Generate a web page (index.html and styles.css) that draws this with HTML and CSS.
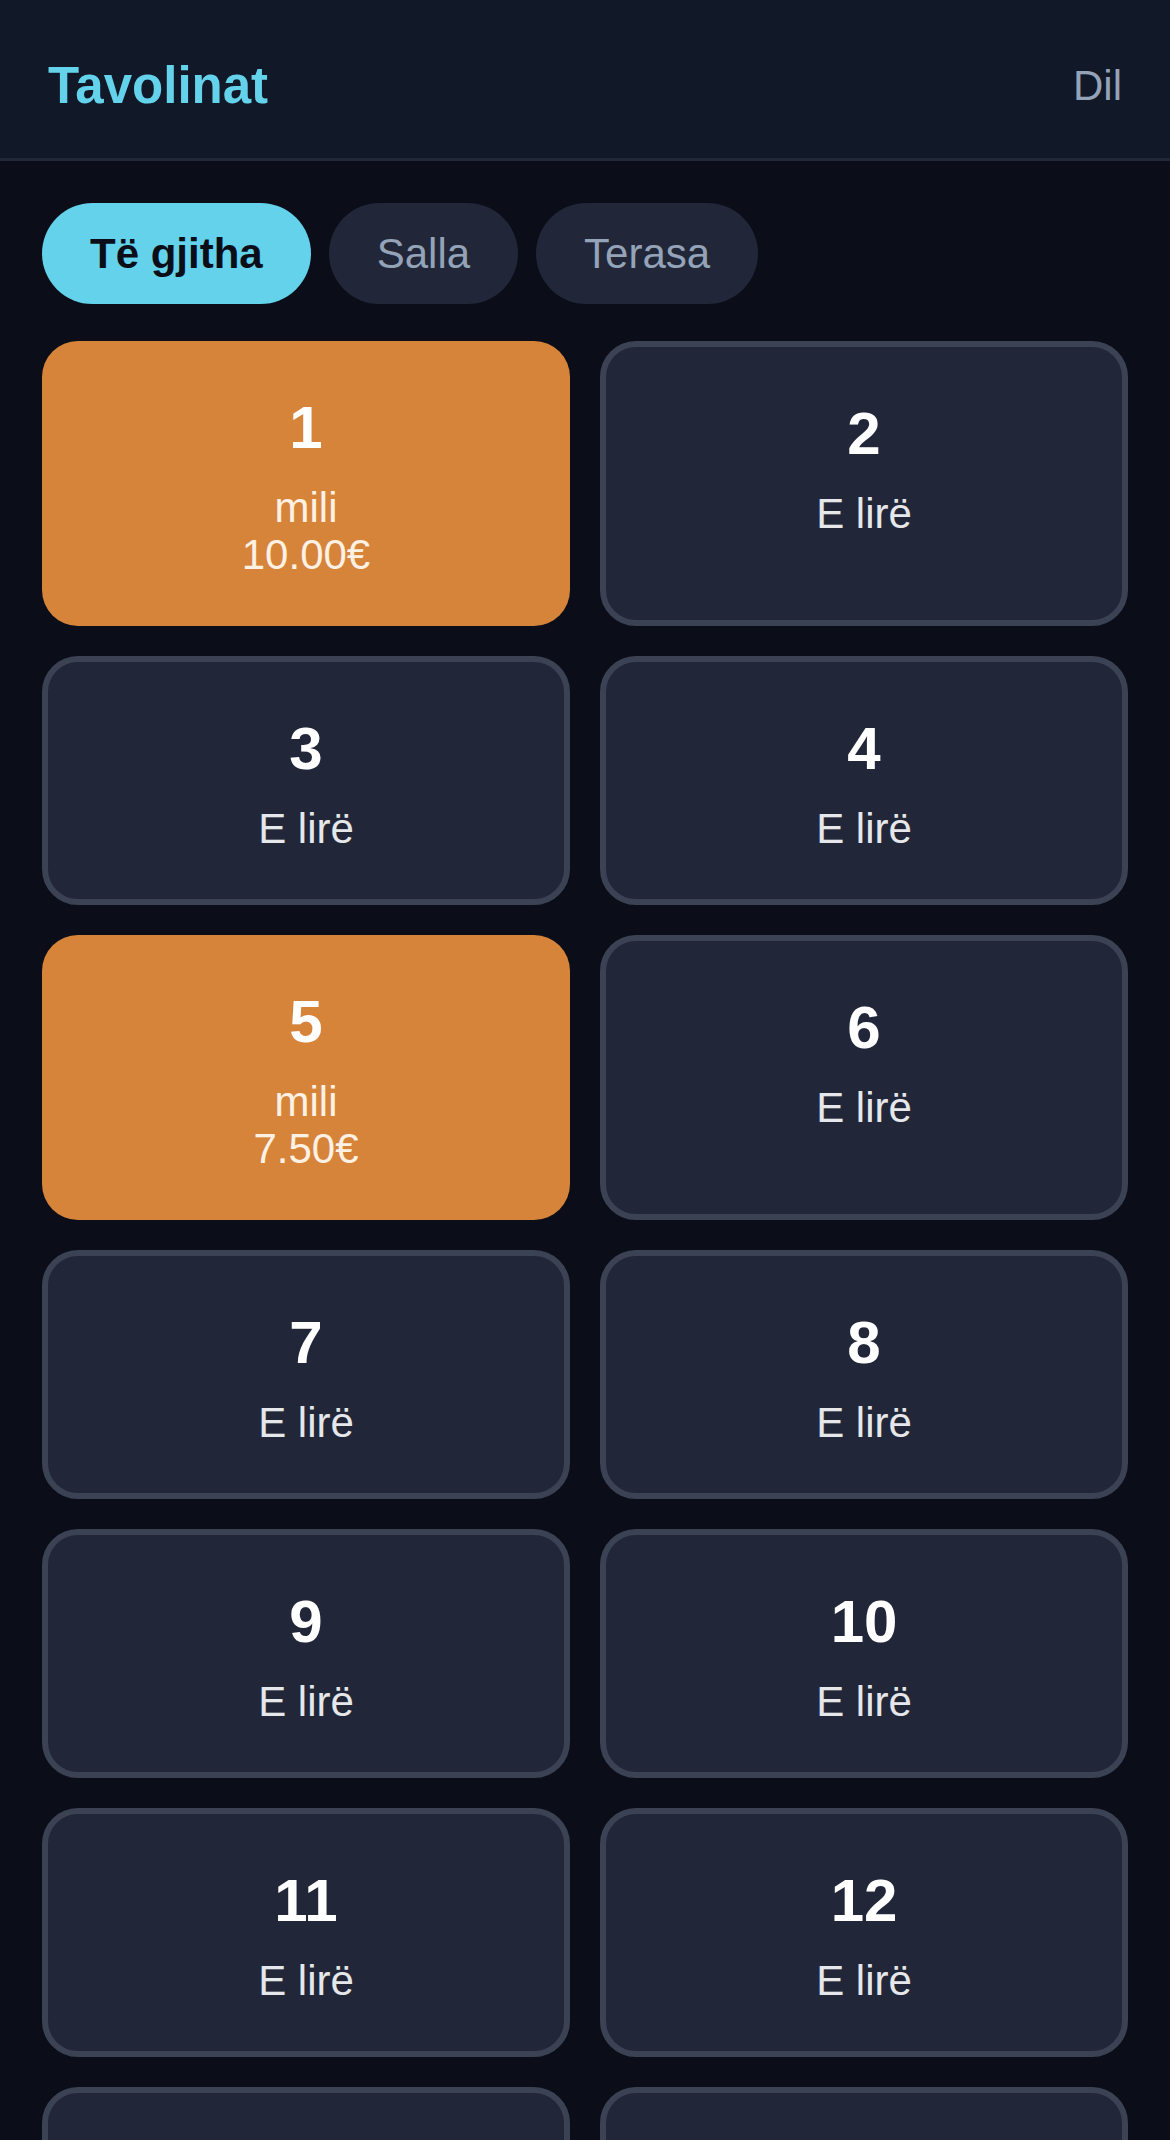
FILE: index.html
```html
<!DOCTYPE html>
<html lang="sq">
<head>
  <meta charset="UTF-8">
  <meta name="viewport" content="width=device-width, initial-scale=1.0">
  <title>Tavolinat</title>
  <link rel="stylesheet" href="styles.css">
</head>
<body>

  <!-- Header -->
  <header class="top_bar">
    <h1 class="title">Tavolinat</h1>
    <a class="logout" href="#">Dil</a>
  </header>

  <!-- Filters -->
  <nav class="tabs">
    <button class="tab active">Të gjitha</button>
    <button class="tab">Salla</button>
    <button class="tab">Terasa</button>
  </nav>

  <!-- Tables -->
  <main class="tables">
    <div class="table busy">
      <div class="number">1</div>
      <div class="status">mili</div>
      <div class="amount">10.00€</div>
    </div>
    <div class="table">
      <div class="number">2</div>
      <div class="status">E lirë</div>
    </div>
    <div class="table">
      <div class="number">3</div>
      <div class="status">E lirë</div>
    </div>
    <div class="table">
      <div class="number">4</div>
      <div class="status">E lirë</div>
    </div>
    <div class="table busy">
      <div class="number">5</div>
      <div class="status">mili</div>
      <div class="amount">7.50€</div>
    </div>
    <div class="table">
      <div class="number">6</div>
      <div class="status">E lirë</div>
    </div>
    <div class="table">
      <div class="number">7</div>
      <div class="status">E lirë</div>
    </div>
    <div class="table">
      <div class="number">8</div>
      <div class="status">E lirë</div>
    </div>
    <div class="table">
      <div class="number">9</div>
      <div class="status">E lirë</div>
    </div>
    <div class="table">
      <div class="number">10</div>
      <div class="status">E lirë</div>
    </div>
    <div class="table">
      <div class="number">11</div>
      <div class="status">E lirë</div>
    </div>
    <div class="table">
      <div class="number">12</div>
      <div class="status">E lirë</div>
    </div>
    <div class="table">
      <div class="number">13</div>
      <div class="status">E lirë</div>
    </div>
    <div class="table">
      <div class="number">14</div>
      <div class="status">E lirë</div>
    </div>
  </main>

</body>
</html>
```

FILE: styles.css
```css
html {
  box-sizing: border-box;
}
*, *:before, *:after {
  box-sizing: inherit;
}
body {
  margin: 0;
  font-family: "Liberation Sans", Arial, sans-serif;
  background-color: #0b0e19;
  color: #e5e7eb;
}

/* header */
.top_bar {
  display: flex;
  align-items: center;
  justify-content: space-between;
  padding: 57px 48px 43px;
  background-color: #111827;
  border-bottom: 3px solid #212838;
}
.title {
  margin: 0;
  font-size: 51px;
  line-height: 58px;
  font-weight: 700;
  color: #63d2ea;
}
.logout {
  font-size: 42px;
  line-height: 48px;
  color: #94a3b8;
  text-decoration: none;
}

/* filter pills */
.tabs {
  display: flex;
  gap: 18px;
  padding: 42px 42px 0;
}
.tab {
  font-family: inherit;
  font-size: 42px;
  line-height: 49px;
  padding: 26px 48px;
  border: none;
  border-radius: 999px;
  background-color: #212738;
  color: #94a3b8;
}
.tab.active {
  background-color: #63d2ea;
  color: #0b0e19;
  font-weight: 700;
}

/* table grid */
.tables {
  display: grid;
  grid-template-columns: 1fr 1fr;
  gap: 30px;
  margin-top: 37px;
  padding: 0 42px;
}
.table {
  text-align: center;
  padding: 52px 0 47px;
  background-color: #212738;
  border: 6px solid #3a4253;
  border-radius: 36px;
}
.table.busy {
  padding-bottom: 48px;
  background-color: #d7843b;
  border: none;
}
.number {
  font-size: 60px;
  line-height: 69px;
  font-weight: 700;
  color: #ffffff;
  margin-bottom: 22px;
}
.status, .amount {
  font-size: 42px;
  line-height: 47px;
}
.busy .status, .busy .amount {
  color: #fdf1e4;
}
```
